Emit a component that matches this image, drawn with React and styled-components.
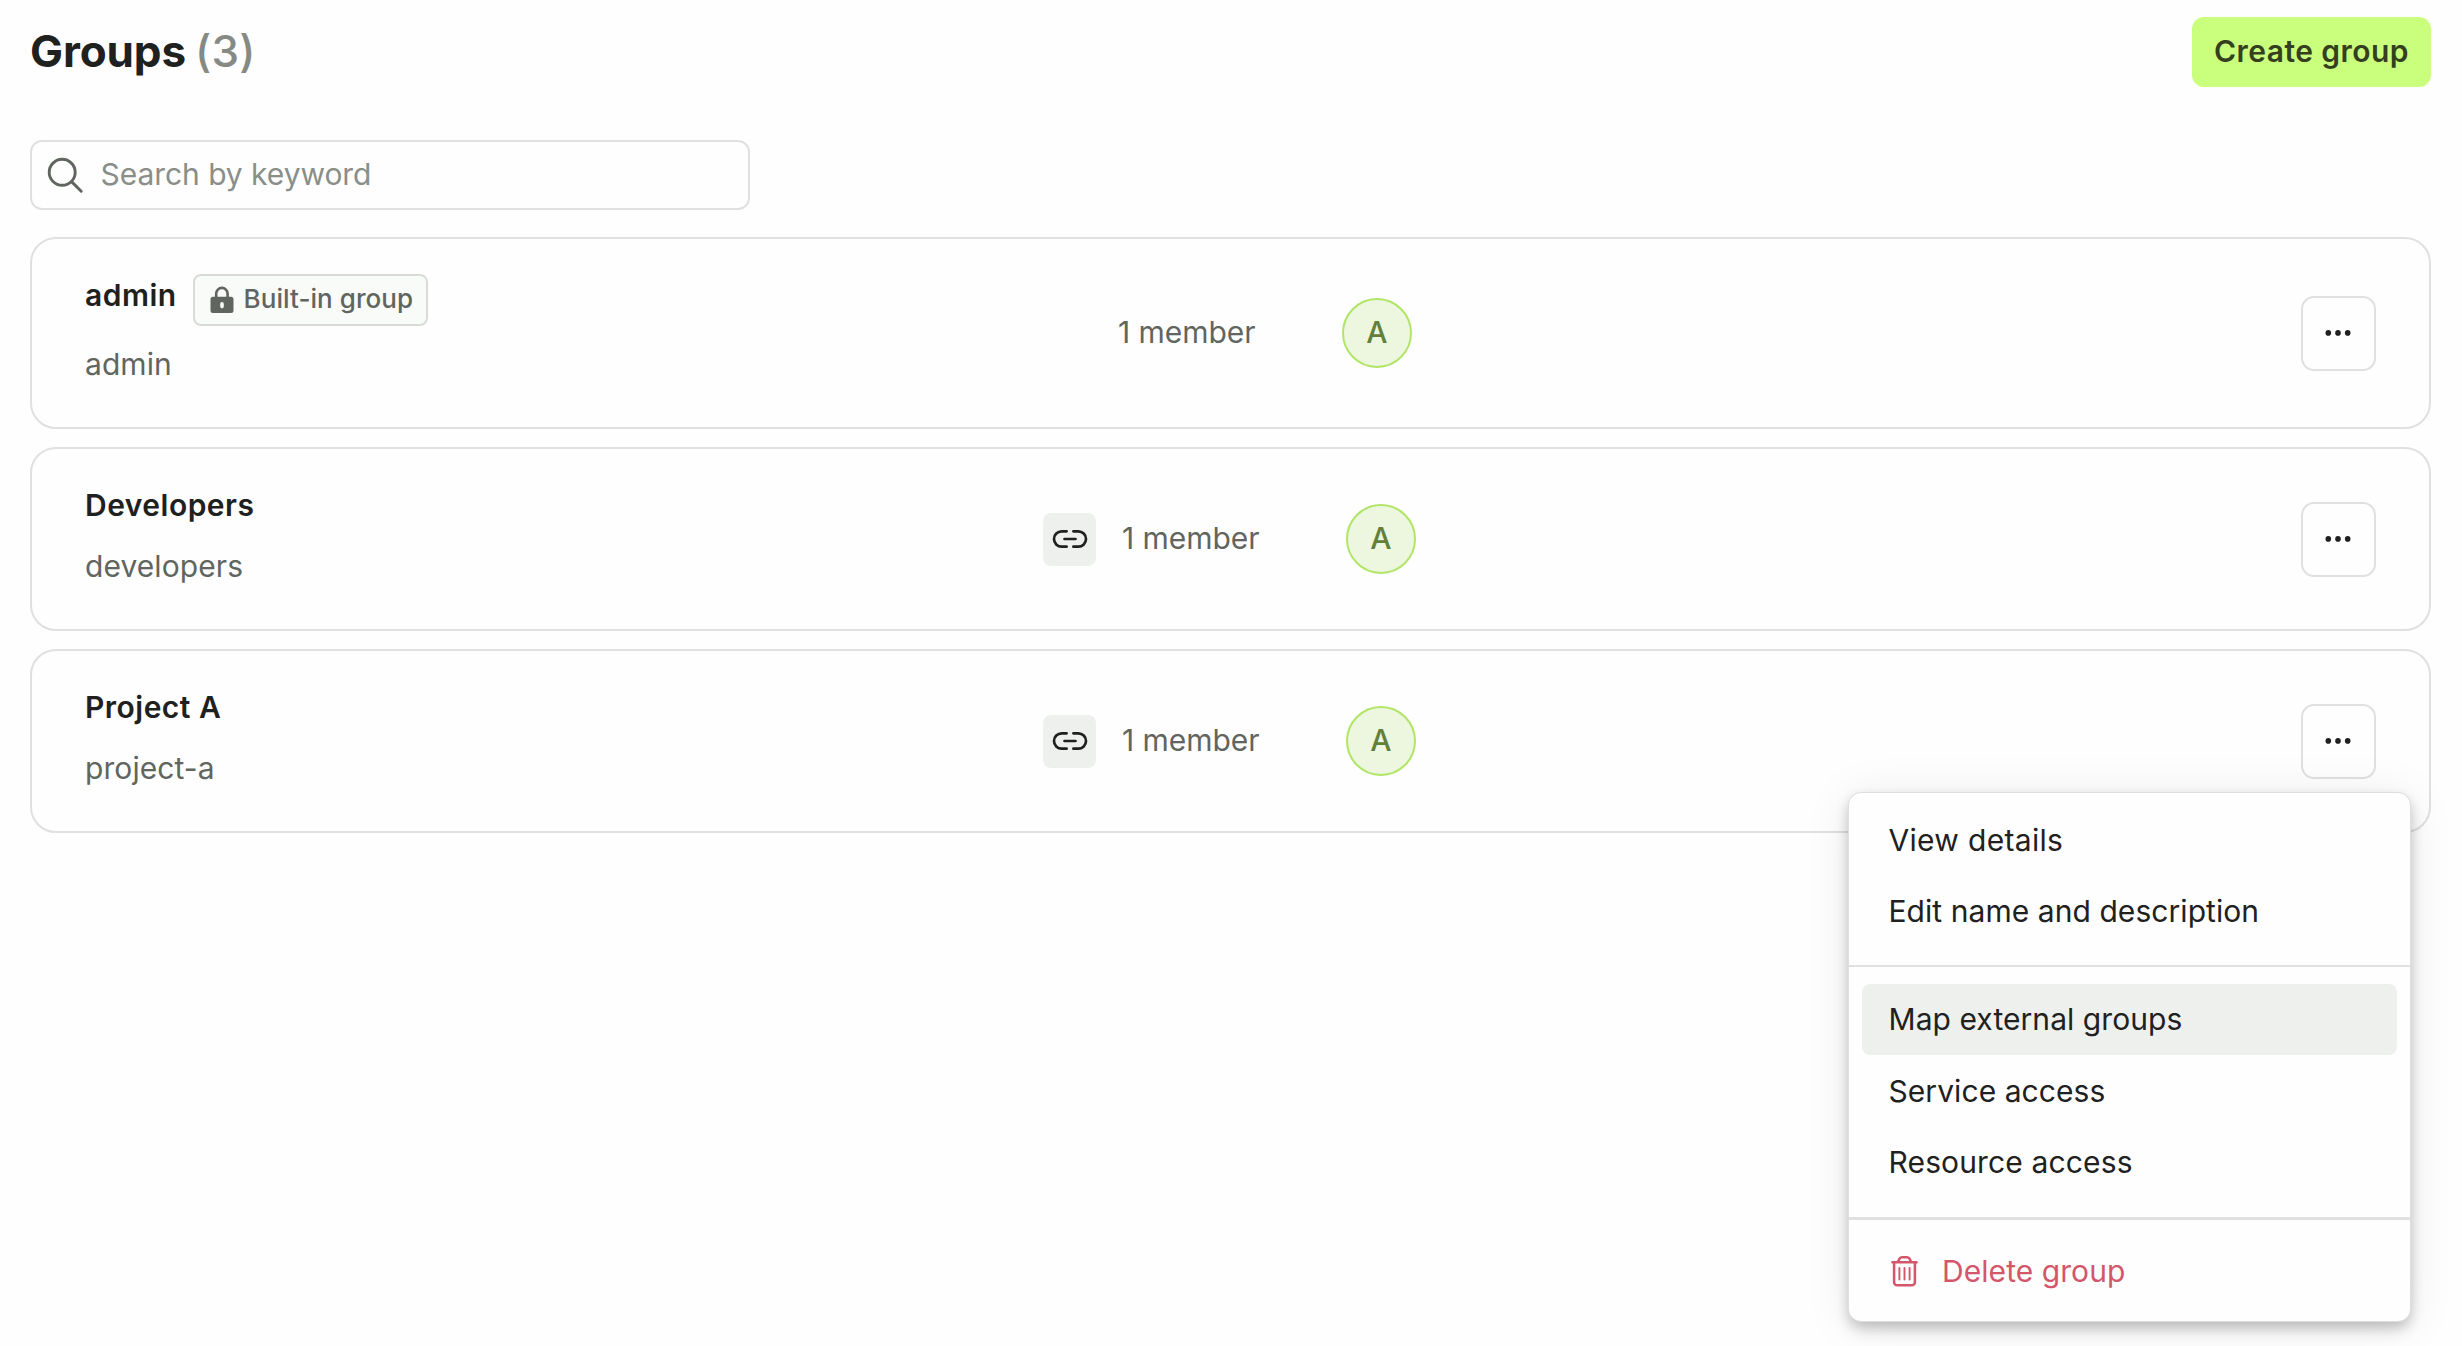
import React from "react";
import styled, { createGlobalStyle, css } from "styled-components";

const GlobalStyle = createGlobalStyle`
  *, *::before, *::after { box-sizing: border-box; }
  html, body { margin: 0; background: #fefefe; overflow: hidden; }
  body { font-family: Inter, "Liberation Sans", sans-serif; color: #1f211f; }
  button, input { font-family: inherit; }
`;

const Page = styled.main`
  height: 1346px;
  padding: 17px 31px 0 30px;
  display: flex;
  flex-direction: column;
`;

const Header = styled.header`
  display: flex;
  align-items: center;
  justify-content: space-between;
  height: 70px;
`;

const Title = styled.h1`
  margin: 0;
  padding-bottom: 2px;
  font-size: 44px;
  font-weight: 700;
  line-height: 60px;
  letter-spacing: -0.1px;
`;

const Count = styled.span`
  margin-left: 9px;
  font-weight: 500;
  letter-spacing: 0.2px;
  color: #868a84;
`;

const CreateButton = styled.button`
  height: 70px;
  width: 239px;
  padding: 0 0 2px;
  border: 0;
  border-radius: 12px;
  background: #caff7d;
  color: #353f1f;
  font-size: 30px;
  font-weight: 600;
  letter-spacing: 0.45px;
`;

const SearchBox = styled.label`
  display: flex;
  align-items: center;
  gap: 17.5px;
  width: 720px;
  height: 70px;
  margin-top: 53px;
  padding: 0 15px;
  border: 2px solid #e0e0e0;
  border-radius: 12px;
`;

const SearchInput = styled.input`
  flex: 1;
  min-width: 0;
  padding: 0 0 2px;
  border: 0;
  outline: 0;
  background: transparent;
  font-size: 30px;
  letter-spacing: -0.05px;
  &::placeholder { color: #8a8e88; opacity: 1; }
`;

const GroupList = styled.section`
  display: flex;
  flex-direction: column;
  gap: 18px;
  margin-top: 27px;
`;

const Card = styled.article`
  display: grid;
  grid-template-columns: 958px 1fr auto;
  align-items: center;
  padding: 0 53px;
  border: 2px solid #e0e0e0;
  border-radius: 26px;
`;

const Info = styled.div`
  display: flex;
  flex-direction: column;
  gap: ${(p) => (p.$compact ? 17 : 19)}px;
  padding: 35px 0 42px;
`;

const NameRow = styled.div`
  display: flex;
  align-items: flex-start;
  gap: 16px;
`;

const Name = styled.h2`
  margin: 0;
  font-size: 30px;
  font-weight: 600;
  line-height: 42px;
  letter-spacing: 0.48px;
`;

const Slug = styled.p`
  margin: 0;
  font-size: 30px;
  line-height: 42px;
  letter-spacing: 0.08px;
  color: #61655f;
`;

const Badge = styled.span`
  display: flex;
  align-items: center;
  gap: 9.5px;
  width: 235px;
  height: 52px;
  padding-left: 15.5px;
  border: 2px solid #dadbd9;
  border-radius: 8px;
  background: #f9fbf8;
  color: #61655f;
`;

const BadgeText = styled.span`
  padding-bottom: 3px;
  font-size: 26px;
  font-weight: 500;
  letter-spacing: 0.05px;
  line-height: 36px;
  white-space: nowrap;
`;

const Members = styled.div`
  display: flex;
  align-items: center;
`;

const LinkSlot = styled.span`
  width: ${(p) => (p.$linked ? 79 : 75)}px;
`;

const LinkBox = styled.span`
  display: flex;
  align-items: center;
  justify-content: center;
  width: 53px;
  height: 53px;
  border-radius: 8px;
  background: #eef0ee;
`;

const MemberCount = styled.span`
  width: 138px;
  margin-right: 86px;
  padding-bottom: 2px;
  font-size: 30px;
  line-height: 42px;
  letter-spacing: -0.04px;
  white-space: nowrap;
  color: #61655f;
`;

const Avatar = styled.span`
  display: flex;
  align-items: center;
  justify-content: center;
  width: 70px;
  height: 70px;
  padding-bottom: 2px;
  border: 2px solid #b0e566;
  border-radius: 50%;
  background: #edf7e0;
  color: #62803a;
  font-size: 30px;
  font-weight: 500;
`;

const Actions = styled.div`
  position: relative;
`;

const MoreButton = styled.button`
  display: flex;
  align-items: center;
  justify-content: center;
  width: 75px;
  height: 75px;
  padding: 0;
  border: 2px solid #e0e0e0;
  border-radius: 13px;
  background: #fefefe;
`;

const Menu = styled.div`
  position: absolute;
  z-index: 1;
  top: 88px;
  right: -35px;
  width: 563px;
  height: 530px;
  padding-top: 11.5px;
  border: 1px solid #dedede;
  border-radius: 13px;
  background: #fefefe;
  box-shadow:
    0 8px 16px -2px rgba(0, 0, 0, 0.2),
    0 4px 12px rgba(0, 0, 0, 0.07),
    0 4px 48px rgba(0, 0, 0, 0.08);
`;

const MenuItem = styled.div`
  display: flex;
  align-items: center;
  gap: 21px;
  height: 71.5px;
  margin: 0 13px;
  padding-left: ${(p) => (p.$danger ? 25 : 26.5)}px;
  border-radius: 8px;
  font-size: 30px;
  letter-spacing: ${(p) => p.$tracking ?? 0.06}px;
  ${(p) => p.$active && css`background: #eef0ee;`}
  ${(p) => p.$danger && css`color: #d3566b;`}
`;

const Separator = styled.div`
  height: ${(p) => p.$size}px;
  margin: ${(p) => p.$space};
  background: #e0e0e0;
`;

const SearchIcon = () => (
  <svg width="36" height="36" viewBox="0 0 36 36" fill="none" stroke="#61655f" strokeWidth="2.9" strokeLinecap="round">
    <circle cx="15.2" cy="15.3" r="13" />
    <path d="M24.8 24.9 34.2 34.2" />
  </svg>
);

const LockIcon = () => (
  <svg width="24" height="28" viewBox="0 0 24 28">
    <path d="M6.2 12V7.6a5.7 5.7 0 0 1 11.4 0V12" fill="none" stroke="#61655f" strokeWidth="2.6" />
    <path
      fillRule="evenodd"
      fill="#61655f"
      d="M3 10.7h18a2.5 2.5 0 0 1 2.5 2.5v11.4a2.5 2.5 0 0 1-2.5 2.5H3a2.5 2.5 0 0 1-2.5-2.5V13.2A2.5 2.5 0 0 1 3 10.7Zm9 5.4a1.8 1.8 0 0 0-1.8 1.8v2.7a1.8 1.8 0 0 0 3.6 0v-2.7A1.8 1.8 0 0 0 12 16.1Z"
    />
  </svg>
);

const LinkIcon = () => (
  <svg width="36" height="36" viewBox="0 0 36 36" fill="none" stroke="#1f211f" strokeWidth="2.7" strokeLinecap="round">
    <path d="M14.6 10.3H9.7a7.7 7.7 0 0 0 0 15.4h4.9M21.4 10.3h4.9a7.7 7.7 0 0 1 0 15.4h-4.9M12.5 18h11" />
  </svg>
);

const DotsIcon = () => (
  <svg width="27" height="8" viewBox="0 0 27 8" fill="#1f211f">
    <circle cx="3.3" cy="3.9" r="2.8" />
    <circle cx="13" cy="3.9" r="2.8" />
    <circle cx="22.7" cy="3.9" r="2.8" />
  </svg>
);

const TrashIcon = () => (
  <svg width="34" height="32" viewBox="-4 0 34 32" fill="none" stroke="#d3566b" strokeLinecap="round" strokeLinejoin="round">
    <path strokeWidth="2.5" d="M1.4 7.3h24.2M3.1 7.8v19.4a3 3 0 0 0 3 3h14.8a3 3 0 0 0 3-3V7.8M7 6.8l1.3-2.9a3 3 0 0 1 2.6-1.7h5.2a3 3 0 0 1 2.6 1.7L20 6.8" />
    <path strokeWidth="1.9" d="M8.4 13v11.6M13.5 13v11.6M18.6 13v11.6" />
  </svg>
);

const GroupMenu = () => (
  <Menu role="menu">
    <MenuItem $tracking={0.32}>View details</MenuItem>
    <MenuItem>Edit name and description</MenuItem>
    <Separator $size={2} $space="17.5px 0 17px" />
    <MenuItem $active>Map external groups</MenuItem>
    <MenuItem>Service access</MenuItem>
    <MenuItem $tracking={0.14}>Resource access</MenuItem>
    <Separator $size={3} $space="18.5px 0 16px" />
    <MenuItem $danger>
      <TrashIcon />
      Delete group
    </MenuItem>
  </Menu>
);

const groups = [
  { name: "admin", slug: "admin", builtIn: true },
  { name: "Developers", slug: "developers", linked: true },
  { name: "Project A", slug: "project-a", linked: true, menuOpen: true },
];

const GroupCard = ({ name, slug, builtIn, linked, menuOpen }) => (
  <Card>
    <Info $compact={builtIn}>
      <NameRow>
        <Name>{name}</Name>
        {builtIn && (
          <Badge>
            <LockIcon />
            <BadgeText>Built-in group</BadgeText>
          </Badge>
        )}
      </NameRow>
      <Slug>{slug}</Slug>
    </Info>
    <Members>
      <LinkSlot $linked={linked}>
        {linked && (
          <LinkBox>
            <LinkIcon />
          </LinkBox>
        )}
      </LinkSlot>
      <MemberCount>1 member</MemberCount>
      <Avatar>A</Avatar>
    </Members>
    <Actions>
      <MoreButton aria-label="More actions">
        <DotsIcon />
      </MoreButton>
      {menuOpen && <GroupMenu />}
    </Actions>
  </Card>
);

export default function App() {
  return (
    <>
      <GlobalStyle />
      <Page>
        <Header>
          <Title>
            Groups<Count>(3)</Count>
          </Title>
          <CreateButton>Create group</CreateButton>
        </Header>
        <SearchBox>
          <SearchIcon />
          <SearchInput placeholder="Search by keyword" />
        </SearchBox>
        <GroupList>
          {groups.map((group) => (
            <GroupCard key={group.name} {...group} />
          ))}
        </GroupList>
      </Page>
    </>
  );
}
